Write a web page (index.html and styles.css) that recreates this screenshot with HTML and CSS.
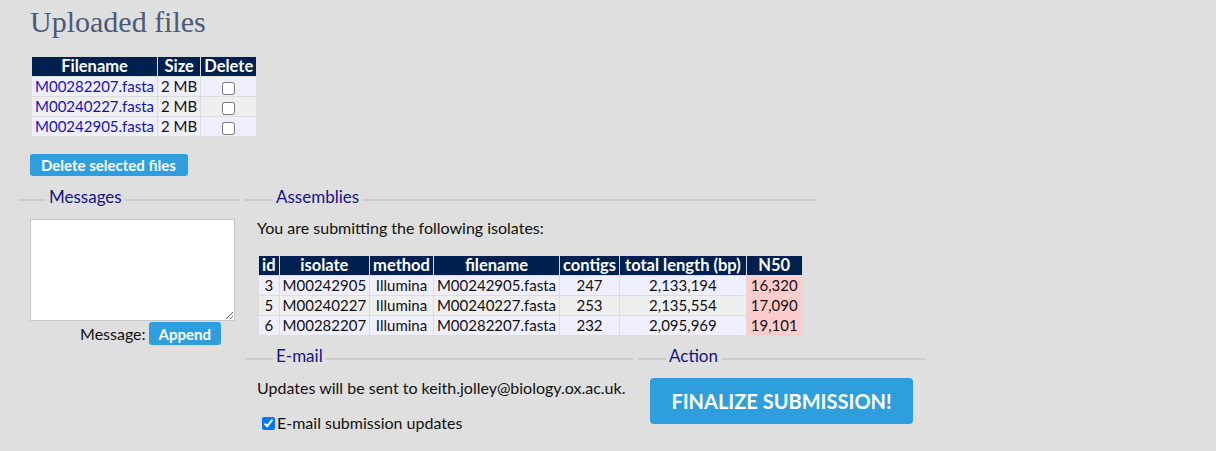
FILE: index.html
```html
<!DOCTYPE html>
<html>
<head>
<meta charset="utf-8">
<link rel="stylesheet" href="styles.css">
</head>
<body>
<div class="page">
  <h1 class="title">Uploaded files</h1>
  <table class="grid files">
    <thead>
      <tr><th>Filename</th><th>Size</th><th>Delete</th></tr>
    </thead>
    <tbody>
      <tr class="odd"><td><a href="#">M00282207.fasta</a></td><td>2 MB</td><td class="c"><input type="checkbox"></td></tr>
      <tr class="even"><td><a href="#">M00240227.fasta</a></td><td>2 MB</td><td class="c"><input type="checkbox"></td></tr>
      <tr class="odd"><td><a href="#">M00242905.fasta</a></td><td>2 MB</td><td class="c"><input type="checkbox"></td></tr>
    </tbody>
  </table>
  <button class="btn small delete-btn">Delete selected files</button>

  <div class="cols">
    <fieldset class="box messages">
      <legend>Messages</legend>
      <textarea class="msg"></textarea>
      <div class="append-row"><label>Message:</label><button class="btn small append">Append</button></div>
    </fieldset>
    <div class="right">
      <fieldset class="box assemblies">
        <legend>Assemblies</legend>
        <p class="intro">You are submitting the following isolates:</p>
        <table class="grid isolates">
          <thead>
            <tr><th>id</th><th>isolate</th><th>method</th><th>filename</th><th>contigs</th><th class="len">total length (bp)</th><th class="n50">N50</th></tr>
          </thead>
          <tbody>
            <tr class="odd"><td>3</td><td>M00242905</td><td>Illumina</td><td>M00242905.fasta</td><td class="c">247</td><td class="c">2,133,194</td><td class="warn">16,320</td></tr>
            <tr class="even"><td>5</td><td>M00240227</td><td>Illumina</td><td>M00240227.fasta</td><td class="c">253</td><td class="c">2,135,554</td><td class="warn">17,090</td></tr>
            <tr class="odd"><td>6</td><td>M00282207</td><td>Illumina</td><td>M00282207.fasta</td><td class="c">232</td><td class="c">2,095,969</td><td class="warn">19,101</td></tr>
          </tbody>
        </table>
      </fieldset>
      <div class="lower">
        <fieldset class="box email">
          <legend>E-mail</legend>
          <p class="updates">Updates will be sent to keith.jolley@biology.ox.ac.uk.</p>
          <label class="check"><input type="checkbox" checked>E-mail submission updates</label>
        </fieldset>
        <fieldset class="box action">
          <legend>Action</legend>
          <button class="btn big">FINALIZE SUBMISSION!</button>
        </fieldset>
      </div>
    </div>
  </div>
</div>
</body>
</html>
```

FILE: styles.css
```css
html, body {
  margin: 0;
  padding: 0;
  background: #dfdfdf;
}
body {
  font-family: Lato, "Open Sans", sans-serif;
  font-size: 16px;
  line-height: 18px;
  color: #111;
}
.page {
  padding: 5px 0 0 18px;
}
.title {
  margin: 0 0 0 12px;
  font-family: "Liberation Serif", serif;
  font-weight: normal;
  font-size: 30px;
  line-height: 34px;
  color: #4b5a78;
}
.grid {
  border-collapse: collapse;
  font-size: 15px;
}
.grid th, .grid td {
  border: 1px solid #dcdcdc;
  padding: 0 3px;
  height: 19px;
  line-height: 19px;
  white-space: nowrap;
  text-align: center;
}
.grid th {
  background: #002050;
  color: #fff;
  font-weight: bold;
  font-size: 16.5px;
}
.grid th.len { padding: 0 5px; }
.grid td.warn { padding: 0 4px; }
.grid tr.odd td { background: #efefff; }
.grid tr.even td { background: #efefef; }
.grid td.warn { background: #ffcccc !important; }
.grid a {
  color: #1414b4;
  text-decoration: none;
}
.files {
  margin: 17px 0 0 13px;
}
.files td { text-align: left; }
.files td.c { text-align: center; }
.files input[type=checkbox] {
  margin: 0;
  vertical-align: middle;
  width: 13px;
  height: 13px;
}
.btn {
  background: #2e9fdc;
  color: #fff;
  border: none;
  border-radius: 3px;
  font-family: Lato, "Open Sans", sans-serif;
  font-weight: bold;
  cursor: pointer;
  padding: 0;
}
.btn.small {
  font-size: 15px;
  height: 22px;
  padding: 0 12px 0 11px;
}
.delete-btn {
  display: block;
  margin: 17px 0 0 12px;
}
.cols {
  display: flex;
  gap: 5px;
  margin-top: 11px;
  align-items: flex-start;
}
.box {
  margin: 0;
  padding: 6px 12px 0 12px;
  border: none;
  border-top: 2px solid #cbcbcb;
  min-width: 0;
}
.box legend {
  margin-left: 16px;
  padding: 0 3px 6px 3px;
  font-size: 17px;
  line-height: 20px;
  color: #141488;
}
.messages {
  width: 198px;
}
.msg {
  display: block;
  width: 205px;
  height: 102px;
  box-sizing: border-box;
  border: 1px solid #c8c8c8;
  background: #fff;
  margin: 0;
  resize: both;
}
.append-row {
  display: flex;
  justify-content: flex-end;
  align-items: center;
  gap: 3px;
  margin-top: 1px;
  padding-right: 14px;
  width: 191px;
}
.append-row label {
  font-size: 16px;
}
.btn.append {
  height: 23px;
  padding: 0 10px;
}
.right {
  display: flex;
  flex-direction: column;
}
.assemblies {
  width: 546px;
}
.intro {
  margin: 0;
  font-size: 16px;
  line-height: 18px;
}
.isolates {
  margin: 18px 0 0 1px;
}
.lower {
  display: flex;
  gap: 5px;
  margin-top: 10px;
}
.email {
  width: 364px;
}
.updates {
  margin: 0;
  font-size: 16px;
  line-height: 20px;
  white-space: nowrap;
}
.check {
  display: flex;
  align-items: center;
  margin: 15px 0 0 5px;
  font-size: 16px;
  line-height: 20px;
}
.check input {
  margin: 0 2px 0 0;
  width: 13px;
  height: 13px;
}
.action {
  width: 263px;
}
.btn.big {
  width: 263px;
  height: 46px;
  font-size: 20px;
  letter-spacing: 0;
  border-radius: 4px;
}
```
